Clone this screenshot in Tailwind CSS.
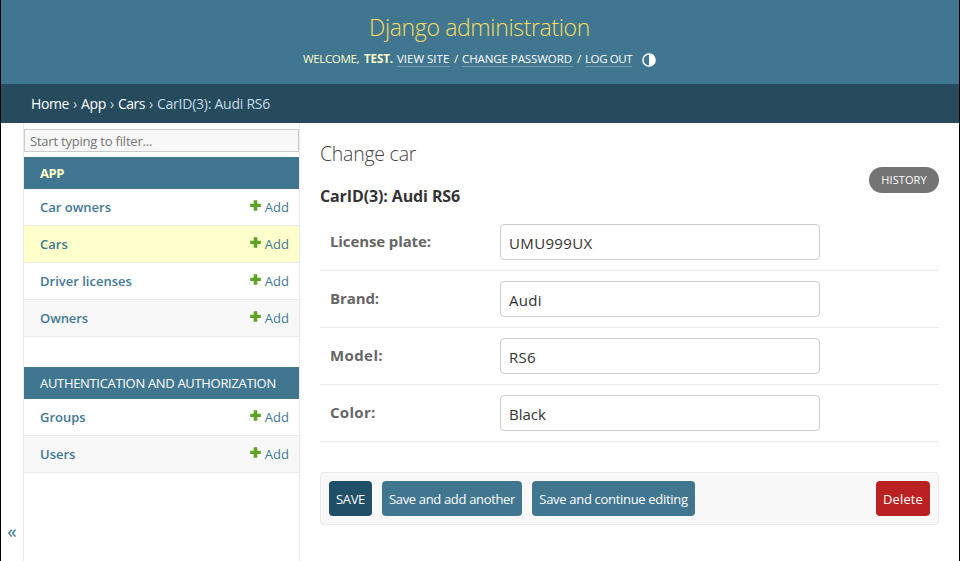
<!DOCTYPE html>
<html lang="en">
<head>
<meta charset="utf-8">
<title>Change car | Django administration</title>
<script src="https://cdn.jsdelivr.net/npm/@tailwindcss/browser@4"></script>
</head>
<body class="bg-white">
<svg class="hidden"><symbol id="plus" viewBox="0 0 11 11"><path d="M3.7.2h3.6v3.5h3.5v3.4H7.3v3.7H3.7V7.1H.2V3.7h3.5z" fill="#5fa225"/></symbol></svg>
<div class="flex h-[561px] w-[960px] flex-col overflow-hidden border-x border-black bg-white font-['Open_Sans','Noto_Sans',sans-serif] text-[#333] whitespace-nowrap">
  <header class="flex h-[84px] shrink-0 flex-col items-center bg-[#417690] pt-[11px]">
    <h1 class="h-8 pr-px text-[23px] leading-8 font-light tracking-[-0.35px] text-[#f5dd5d]">Django administration</h1>
    <div class="mt-[5px] flex h-[22px] items-start pr-px text-[11.5px] leading-[22px] text-[#ffc]">
      <span class="w-[61px] font-medium tracking-[-0.35px]">WELCOME,</span>
      <span class="w-[33px] font-bold tracking-[-0.1px]">TEST.</span>
      <a class="mt-1 h-[15px] w-[53px] border-b border-white/25 leading-[14px] font-medium text-white">VIEW SITE</a>
      <span class="w-3 text-center">/</span>
      <a class="mt-1 h-[15px] w-[111px] border-b border-white/25 leading-[14px] font-medium tracking-[-0.08px] text-white">CHANGE PASSWORD</a>
      <span class="w-3 text-center">/</span>
      <a class="mt-1 h-[15px] w-[47px] border-b border-white/25 leading-[14px] tracking-[-0.4px] text-white">LOG OUT</a>
      <svg class="mt-[5px] ml-[10px] size-[14px]" viewBox="0 0 14 14"><circle cx="7" cy="7" r="6.1" fill="none" stroke="#fff" stroke-width="1.5"/><path d="M7 1a6 6 0 0 1 0 12z" fill="#fff"/></svg>
    </div>
  </header>
  <nav class="flex h-[39px] shrink-0 items-center bg-[#264b5d] pl-[30px] text-sm text-[#c4dce8]">
    <a class="w-[38px] font-medium tracking-[-0.39px] text-white">Home</a><span class="w-3 text-center">›</span>
    <a class="w-[25px] font-medium tracking-[-0.33px] text-white">App</a><span class="w-3 text-center">›</span>
    <a class="w-[27px] font-medium tracking-[-0.5px] text-white">Cars</a><span class="w-3 text-center">›</span>
    <span class="tracking-[-0.25px]">CarID(3): Audi RS6</span>
  </nav>
  <div class="flex min-h-0 flex-1">
    <div class="flex w-[22px] shrink-0 items-end justify-center pb-[18px] text-[19px] leading-6 text-[#417690]">«</div>
    <aside class="w-[277px] shrink-0 border-x border-[#eaeaea] pt-[6px] text-[13px]">
      <input class="block h-[23px] w-full border border-[#ccc] bg-[#f8f8f8] px-[5px] text-[13px] tracking-[-0.21px] placeholder:text-[#757575]" placeholder="Start typing to filter...">
      <h2 class="mt-[5px] flex h-8 items-center bg-[#417690] px-4 pt-[2px] font-bold tracking-[-0.4px] text-[#ffc]">APP</h2>
      <div class="flex h-[37px] items-center justify-between border-b border-[#eaeaea] pt-[2px] pr-[10px] pl-4 text-[#417893]"><b class="font-semibold">Car owners</b><span class="flex items-center gap-1"><svg class="mb-[6px] size-[11px]"><use href="#plus"/></svg>Add</span></div>
      <div class="flex h-[37px] items-center justify-between border-b border-[#eaeaea] bg-[#ffc] pt-[2px] pr-[10px] pl-4 text-[#417893]"><b class="font-semibold">Cars</b><span class="flex items-center gap-1"><svg class="mb-[6px] size-[11px]"><use href="#plus"/></svg>Add</span></div>
      <div class="flex h-[37px] items-center justify-between border-b border-[#eaeaea] pt-[2px] pr-[10px] pl-4 text-[#417893]"><b class="font-semibold">Driver licenses</b><span class="flex items-center gap-1"><svg class="mb-[6px] size-[11px]"><use href="#plus"/></svg>Add</span></div>
      <div class="flex h-[37px] items-center justify-between border-b border-[#eaeaea] bg-[#f8f8f8] pt-[2px] pr-[10px] pl-4 text-[#417893]"><b class="font-semibold tracking-[-0.08px]">Owners</b><span class="flex items-center gap-1"><svg class="mb-[6px] size-[11px]"><use href="#plus"/></svg>Add</span></div>
      <h2 class="mt-[30px] flex h-8 items-center bg-[#417690] px-4 pt-[2px] tracking-[-0.32px] text-white">AUTHENTICATION AND AUTHORIZATION</h2>
      <div class="flex h-[37px] items-center justify-between border-b border-[#eaeaea] pt-[2px] pr-[10px] pl-4 text-[#417893]"><b class="font-semibold">Groups</b><span class="flex items-center gap-1"><svg class="mb-[6px] size-[11px]"><use href="#plus"/></svg>Add</span></div>
      <div class="flex h-[37px] items-center justify-between border-b border-[#eaeaea] bg-[#f8f8f8] pt-[2px] pr-[10px] pl-4 text-[#417893]"><b class="font-semibold">Users</b><span class="flex items-center gap-1"><svg class="mb-[6px] size-[11px]"><use href="#plus"/></svg>Add</span></div>
    </aside>
    <main class="flex flex-1 flex-col pt-5 pr-5 pl-5">
      <div class="flex h-[50px] justify-between">
        <h1 class="h-5 text-[19.5px] leading-[22px] font-light tracking-[-0.25px] text-[#444]">Change car</h1>
        <a class="mt-6 flex h-[26px] w-[70px] items-center justify-center rounded-full bg-[#747474] text-[11px] tracking-[0.1px] text-white">HISTORY</a>
      </div>
      <h2 class="h-[21px] text-base leading-[7px] font-bold tracking-[-0.12px]">CarID(3): Audi RS6</h2>
      <form class="flex flex-col">
        <div class="flex h-[57px] items-start border-b border-[#eaeaea] pt-[10px] pl-[10px]"><label class="w-[170px] text-[15px] leading-[34px] font-bold tracking-[-0.11px] text-[#666]">License plate:</label><input class="h-9 w-80 rounded border border-[#ccc] px-2 pt-px text-[15px] tracking-[0.35px]" value="UMU999UX"></div>
        <div class="flex h-[57px] items-start border-b border-[#eaeaea] pt-[10px] pl-[10px]"><label class="w-[170px] text-[15px] leading-[34px] font-bold tracking-[-0.1px] text-[#666]">Brand:</label><input class="h-9 w-80 rounded border border-[#ccc] px-2 pt-px text-[15px] tracking-[0.3px]" value="Audi"></div>
        <div class="flex h-[57px] items-start border-b border-[#eaeaea] pt-[10px] pl-[10px]"><label class="w-[170px] text-[15px] leading-[34px] font-bold tracking-[0.4px] text-[#666]">Model:</label><input class="h-9 w-80 rounded border border-[#ccc] px-2 pt-px text-[15px] tracking-[0.3px]" value="RS6"></div>
        <div class="flex h-[57px] items-start border-b border-[#eaeaea] pt-[10px] pl-[10px]"><label class="w-[170px] text-[15px] leading-[34px] font-bold tracking-[0.3px] text-[#666]">Color:</label><input class="h-9 w-80 rounded border border-[#ccc] px-2 pt-px text-[15px]" value="Black"></div>
        <div class="mt-[30px] flex h-[53px] items-center gap-[10px] rounded border border-[#eaeaea] bg-[#f8f8f8] px-2 text-[13px] text-white">
          <button type="button" class="h-[35px] w-[43px] rounded bg-[#205067] pt-[2px] tracking-[-0.33px]">SAVE</button>
          <button type="button" class="h-[35px] w-[140px] rounded bg-[#417690] pt-[2px] tracking-[-0.34px]">Save and add another</button>
          <button type="button" class="h-[35px] w-[163px] rounded bg-[#417690] pt-[2px] tracking-[-0.31px]">Save and continue editing</button>
          <a class="ml-auto flex h-[35px] w-[54px] items-center justify-center rounded bg-[#ba2121] pt-[2px] tracking-[0.1px]">Delete</a>
        </div>
      </form>
    </main>
  </div>
</div>
</body>
</html>
